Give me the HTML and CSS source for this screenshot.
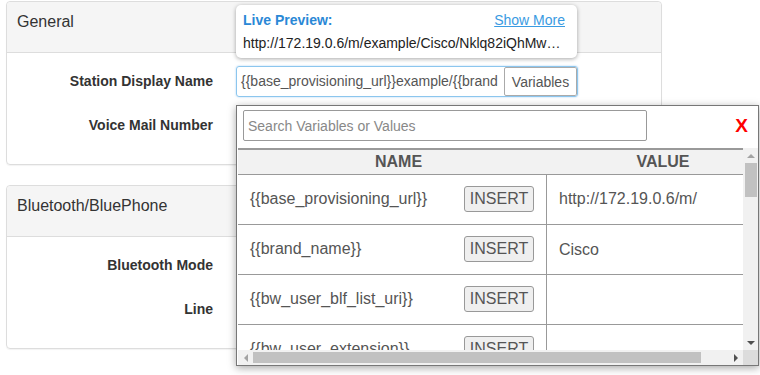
FILE: index.html
```html
<html lang="en">
	<head>
		<meta charset="UTF-8">
		<meta name="viewport" content="width=device-width, initial-scale=1">
		<title>Device Settings</title>
		<link rel="stylesheet" href="styles.css">
	</head>
	<body>
		<div class="page">
			<section class="card">
				<header class="card-head">General</header>
				<div class="card-body">
					<div class="row">
						<label class="row-label">Station Display Name</label>
						<div class="field">
							<div class="preview">
								<div class="preview-top">
									<b class="preview-title">Live Preview:</b>
									<a href="#" class="preview-more">Show More</a>
								</div>
								<div class="preview-url">http://172.19.0.6/m/example/Cisco/Nklq82iQhMw2sPz0aQe/line1</div>
							</div>

							<div class="var-input">
								<span class="var-text">{{base_provisioning_url}}example/{{brand</span>
								<button type="button" class="var-btn">Variables</button>
							</div>

							<div class="var-panel">
								<div class="var-search">
									<input class="search-input" placeholder="Search Variables or Values">
									<span class="var-close">X</span>
								</div>
								<div class="var-scroll">
									<div class="var-view">
										<table class="var-table">
											<thead>
												<tr><th class="col-name">NAME</th><th class="col-value">VALUE</th></tr>
											</thead>
											<tbody>
												<tr><td class="col-name"><span>{{base_provisioning_url}}</span><button class="insert">INSERT</button></td><td>http://172.19.0.6/m/</td></tr>
												<tr><td class="col-name"><span>{{brand_name}}</span><button class="insert">INSERT</button></td><td>Cisco</td></tr>
												<tr><td class="col-name"><span>{{bw_user_blf_list_uri}}</span><button class="insert">INSERT</button></td><td></td></tr>
												<tr><td class="col-name"><span>{{bw_user_extension}}</span><button class="insert">INSERT</button></td><td></td></tr>
												<tr><td class="col-name"><span>{{bw_user_first_name}}</span><button class="insert">INSERT</button></td><td></td></tr>
											</tbody>
										</table>
									</div>
									<div class="vbar">
										<span class="sb-btn"><i class="arrow up"></i></span>
										<span class="sb-track"><i class="thumb-v"></i></span>
										<span class="sb-btn"><i class="arrow down"></i></span>
									</div>
									<div class="hbar">
										<span class="sb-btn"><i class="arrow left"></i></span>
										<span class="sb-track"><i class="thumb-h"></i></span>
										<span class="sb-btn"><i class="arrow right"></i></span>
									</div>
									<div class="sb-corner"></div>
								</div>
							</div>
						</div>
					</div>
					<div class="row">
						<label class="row-label">Voice Mail Number</label>
						<div class="field"><input class="text-input"></div>
					</div>
				</div>
			</section>

			<section class="card">
				<header class="card-head">Bluetooth/BluePhone</header>
				<div class="card-body">
					<div class="row">
						<label class="row-label">Bluetooth Mode</label>
						<div class="field"><input class="text-input"></div>
					</div>
					<div class="row">
						<label class="row-label">Line</label>
						<div class="field"><input class="text-input"></div>
					</div>
				</div>
			</section>
		</div>
	</body>
</html>
```

FILE: styles.css
```css
body {
	margin: 0;
	font-family: "Liberation Sans", Arial, sans-serif;
	font-size: 14px;
	color: #333;
	background: #fff;
}
.page {
	padding: 1px 0 0 6px;
	width: 656px;
}
.card {
	border: 1px solid #ddd;
	border-radius: 4px;
	box-shadow: 0 1px 1px rgba(0, 0, 0, .05);
	margin-bottom: 20px;
}
.card-head {
	height: 51px;
	box-sizing: border-box;
	padding: 10px 10px;
	line-height: 20px;
	font-size: 16px;
	background: #f5f5f5;
	border-bottom: 1px solid #ddd;
	border-radius: 4px 4px 0 0;
}
.card-body {
	padding: 13px 0 10px;
}
.row {
	display: grid;
	grid-template-columns: 229px 342px;
	height: 31px;
	margin-bottom: 13px;
}
.row-label {
	font-weight: bold;
	text-align: right;
	padding-right: 23px;
	line-height: 31px;
}
.field {
	position: relative;
}
.text-input {
	box-sizing: border-box;
	width: 100%;
	height: 31px;
	border: 1px solid #ccc;
	border-radius: 3px;
}

/* live preview bubble */
.preview {
	position: absolute;
	left: 0;
	top: -61px;
	width: 341px;
	height: 53px;
	box-sizing: border-box;
	padding: 5px 12px 0 7px;
	background: #fff;
	border-radius: 5px;
	box-shadow: 0 1px 4px rgba(0, 0, 0, .35);
	z-index: 2;
}
.preview-top {
	display: flex;
	justify-content: space-between;
	line-height: 20px;
}
.preview-title {
	color: #2a88d6;
}
.preview-more {
	color: #3a9be2;
}
.preview-url {
	margin-top: 3px;
	line-height: 20px;
	color: #222;
	white-space: nowrap;
	overflow: hidden;
	text-overflow: ellipsis;
}

/* input with variables */
.var-input {
	display: flex;
	height: 31px;
	box-sizing: border-box;
	border: 1px solid #8cc6ee;
	border-radius: 3px;
	box-shadow: 0 0 2px rgba(102, 175, 233, .6);
	overflow: hidden;
}
.var-text {
	flex: 1;
	padding-left: 4px;
	line-height: 29px;
	color: #555;
	white-space: nowrap;
	overflow: hidden;
}
.var-btn {
	flex: none;
	width: 73px;
	border: 1px solid #aaa;
	border-radius: 2px;
	background: #fff;
	font: inherit;
	color: #555;
	padding: 0;
}

/* variables dropdown */
.var-panel {
	position: absolute;
	left: 0;
	top: 39px;
	width: 523px;
	height: 261px;
	box-sizing: border-box;
	background: #fff;
	border: 1px solid #777;
	box-shadow: 0 2px 8px rgba(0, 0, 0, .35);
	z-index: 3;
}
.var-search {
	display: flex;
	justify-content: space-between;
	align-items: center;
	padding: 4px 10px 0 6px;
}
.search-input {
	width: 404px;
	height: 31px;
	box-sizing: border-box;
	border: 1px solid #999;
	border-radius: 2px;
	padding: 0 4px;
	font: inherit;
}
.search-input::placeholder {
	color: #888;
}
.var-close {
	color: #f00;
	font-weight: bold;
	font-size: 19px;
}

/* scroll box with drawn scrollbars */
.var-scroll {
	display: grid;
	grid-template-columns: 505px 15px;
	grid-template-rows: 202px 15px;
	margin: 7px 0 0 1px;
}
.var-view {
	overflow: hidden;
}
.vbar,
.hbar {
	display: flex;
	background: #f1f1f1;
}
.vbar {
	flex-direction: column;
}
.sb-btn {
	flex: none;
	width: 15px;
	height: 15px;
	display: flex;
	align-items: center;
	justify-content: center;
}
.sb-track {
	flex: 1;
	display: flex;
}
.vbar .sb-track {
	flex-direction: column;
}
.thumb-v {
	width: 12px;
	height: 34px;
	margin-left: 2px;
	background: #c1c1c1;
}
.thumb-h {
	width: 448px;
	height: 11px;
	margin-top: 2px;
	background: #c1c1c1;
}
.sb-corner {
	background: #dcdcdc;
}
.arrow {
	width: 0;
	height: 0;
	border: 4px solid transparent;
}
.arrow.up {
	border-top: 0;
	border-bottom-color: #a3a3a3;
}
.arrow.down {
	border-bottom: 0;
	border-top-color: #505050;
}
.arrow.left {
	border-left: 0;
	border-right-color: #a3a3a3;
}
.arrow.right {
	border-right: 0;
	border-left-color: #505050;
}

.var-table {
	width: 533px;
	border-collapse: collapse;
	color: #555;
}
.var-table th {
	height: 25px;
	padding: 0;
	background: #f2f2f2;
	border-top: 2px solid #999;
	border-bottom: 1px solid #999;
	font-weight: bold;
	text-align: center;
}
.var-table th.col-name {
	padding-left: 12px;
}
.var-table th.col-value {
	padding-left: 8px;
}
.var-table td {
	height: 49px;
	padding: 0 12px;
	border-bottom: 1px solid #999;
}
.var-table .col-name {
	width: 309px;
	box-sizing: border-box;
	border-right: 1px solid #999;
}
.var-table th.col-name {
	border-right: 0;
}
td.col-name {
	display: flex;
	align-items: center;
	justify-content: space-between;
	height: 50px;
	box-sizing: border-box;
}
.insert {
	width: 70px;
	height: 26px;
	padding: 0;
	background: #efefef;
	border: 1px solid #999;
	border-radius: 3px;
	font: inherit;
	color: #555;
}
```
